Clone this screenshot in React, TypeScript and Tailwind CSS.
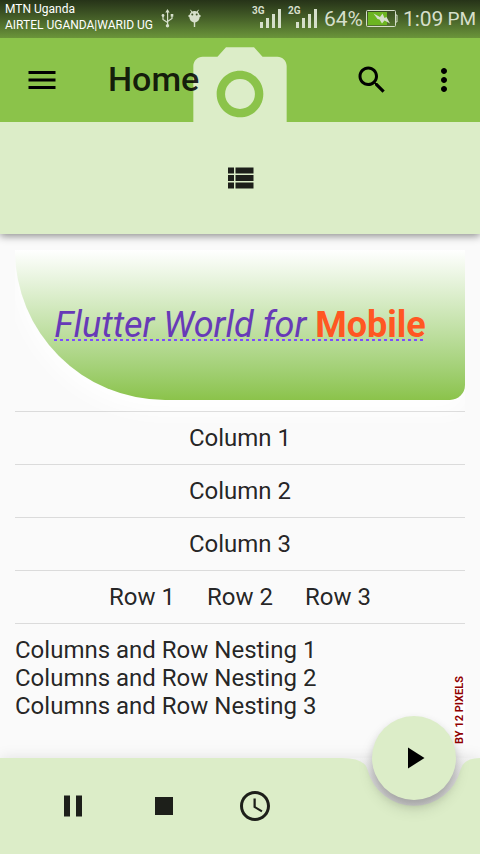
import type { ReactNode } from "react";

const COLUMNS = ["Column 1", "Column 2", "Column 3"];
const ROWS = ["Row 1", "Row 2", "Row 3"];
const NESTED = [
  "Columns and Row Nesting 1",
  "Columns and Row Nesting 2",
  "Columns and Row Nesting 3",
];

function Icon({ path }: { path: string }) {
  return (
    <svg viewBox="0 0 24 24" className="size-9" fill="currentColor" aria-hidden="true">
      <path d={path} />
    </svg>
  );
}

function IconButton({ label, children }: { label: string; children: ReactNode }) {
  return (
    <button
      type="button"
      aria-label={label}
      className="flex size-[72px] shrink-0 items-center justify-center"
    >
      {children}
    </button>
  );
}

function Signal({ network }: { network: string }) {
  return (
    <div className="relative h-5 w-[29px] pl-2">
      <span className="absolute -top-1 left-0 text-[10px] leading-3 font-bold">{network}</span>
      <svg viewBox="0 0 21 20" className="h-5 w-[21px]" fill="currentColor" aria-hidden="true">
        <path d="M0 13h3v6H0zM6 9h3v10H6zM12 5h3v14h-3zM18 0h3v19h-3z" />
      </svg>
    </div>
  );
}

function StatusBar() {
  return (
    <div className="flex h-[38px] items-start bg-linear-to-b from-[#263318] to-[#6b953a] text-[#d6dfcb]">
      <div className="pl-[5px] pt-px text-[12px] leading-4 whitespace-nowrap text-white">
        <p>MTN Uganda</p>
        <p>AIRTEL UGANDA|WARID UG</p>
      </div>
      <div className="flex gap-[13px] pt-[9px] pl-2">
        <svg viewBox="0 0 14 19" className="h-[19px] w-[14px]" fill="currentColor" aria-hidden="true">
          <path d="M6.500 0l2.200 3.500H4.300zM6 3h1.200v13H6z" />
          <circle cx="6.500" cy="16.800" r="1.700" />
          <path d="M2 7v3.500L6.500 13.500M11 6.500v3L6.500 12.500" fill="none" stroke="currentColor" strokeWidth="1.200" />
          <circle cx="2" cy="6.500" r="1.400" />
          <path d="M9.700 5h2.600v2.600H9.700z" />
        </svg>
        <svg viewBox="0 0 14 19" className="h-[19px] w-[14px]" fill="currentColor" aria-hidden="true">
          <path d="M2.500 .8L4 3.500M10.500 .8L9 3.500" stroke="currentColor" strokeWidth="1" />
          <path d="M1.500 6C2 3.200 4 2 6.500 2s4.500 1.200 5 4h1v2h-.8c-.2 3-2 5-4.500 5.400V18H5.800v-4.600C3.300 13 1.500 11 1.300 8H.5V6z" />
          <circle cx="4.300" cy="5.500" r="1" fill="#3f5527" />
          <circle cx="8.700" cy="5.500" r="1" fill="#3f5527" />
        </svg>
      </div>
      <div className="ml-auto flex gap-[7px] pt-[9px] pr-1">
        <Signal network="3G" />
        <Signal network="2G" />
        <div className="flex h-5 items-center text-[21px] leading-[22px] whitespace-nowrap">
          <span>64%</span>
          <svg viewBox="0 0 32 18" className="mr-[5px] ml-[3px] h-[18px] w-8" aria-hidden="true">
            <rect x="0.500" y="0.500" width="29" height="16" rx="1" fill="none" stroke="currentColor" />
            <path d="M2 2h19v13H2z" fill="#6cb521" />
            <path d="M30 5h1v7h-1" fill="none" stroke="currentColor" />
            <path d="M7.500 3.500L14 7 16.500 3.500 18.500 8 20.500 7 24 13.500 18.500 10.500 16 13.500 13.500 9.500 11.500 9z" fill="currentColor" />
          </svg>
          <span>1:09</span>
          <span className="ml-1 text-[19px]">PM</span>
        </div>
      </div>
    </div>
  );
}

function AppBar() {
  return (
    <header className="relative bg-[#8bc34a] shadow-[0_2px_8px_rgba(0,0,0,0.45)]">
      <StatusBar />
      <div className="relative flex h-[84px] items-center overflow-hidden text-black">
        {/* Camera artwork sits behind the toolbar and is cut off by the tab area */}
        <svg
          viewBox="0 0 24 24"
          className="absolute top-0 left-1/2 size-28 -translate-x-1/2"
          fill="#dcedc8"
          aria-hidden="true"
        >
          <circle cx="12" cy="12" r="3.200" />
          <path d="M9 2L7.170 4H4c-1.100 0-2 .9-2 2v12c0 1.100.9 2 2 2h16c1.100 0 2-.9 2-2V6c0-1.100-.9-2-2-2h-3.170L15 2H9zm3 15c-2.760 0-5-2.240-5-5s2.240-5 5-5 5 2.240 5 5-2.240 5-5 5z" />
        </svg>
        <div className="relative flex flex-1 items-center">
          <div className="flex w-[84px] justify-center">
            <IconButton label="Menu">
              <Icon path="M3 18h18v-2H3v2zm0-5h18v-2H3v2zm0-7v2h18V6H3z" />
            </IconButton>
          </div>
          <h1 className="flex-1 pb-0.5 pl-6 text-[34px] leading-10 font-medium text-black/87">Home</h1>
          <IconButton label="Search">
            <Icon path="M15.500 14h-.79l-.28-.27C15.410 12.590 16 11.110 16 9.500 16 5.910 13.090 3 9.500 3S3 5.910 3 9.500 5.910 16 9.500 16c1.610 0 3.090-.59 4.230-1.570l.27.28v.79l5 4.990L20.490 19l-4.990-5zm-6 0C7.010 14 5 11.990 5 9.500S7.010 5 9.500 5 14 7.010 14 9.500 11.990 14 9.500 14z" />
          </IconButton>
          <IconButton label="More options">
            <Icon path="M12 8c1.100 0 2-.9 2-2s-.9-2-2-2-2 .9-2 2 .9 2 2 2zm0 2c-1.100 0-2 .9-2 2s.9 2 2 2 2-.9 2-2-.9-2-2-2zm0 6c-1.100 0-2 .9-2 2s.9 2 2 2 2-.9 2-2-.9-2-2-2z" />
          </IconButton>
        </div>
      </div>
      <div className="flex h-28 items-center justify-center bg-[#dcedc8] text-black/87">
        <IconButton label="List view">
          <Icon path="M4 14h4v-4H4v4zm0 5h4v-4H4v4zM4 9h4V5H4v4zm5 5h12v-4H9v4zm0 5h12v-4H9v4zM9 5v4h12V5H9z" />
        </IconButton>
      </div>
    </header>
  );
}

function Footer() {
  return (
    <footer className="relative flex h-24 items-center gap-[19px] bg-[#dcedc8] pl-[37px] text-black/87 shadow-[0_0_14px_rgba(0,0,0,0.1)]">
      <IconButton label="Pause">
        <Icon path="M6 19h4V5H6v14zm8-14v14h4V5h-4z" />
      </IconButton>
      <IconButton label="Stop">
        <Icon path="M6 6h12v12H6z" />
      </IconButton>
      <IconButton label="Recent">
        <Icon path="M11.990 2C6.470 2 2 6.480 2 12s4.470 10 9.990 10C17.520 22 22 17.520 22 12S17.520 2 11.990 2zM12 20c-4.420 0-8-3.580-8-8s3.580-8 8-8 8 3.580 8 8-3.580 8-8 8zm.5-13H11v6l5.250 3.150.75-1.230-4.500-2.670z" />
      </IconButton>
      {/* Notch cut into the bar around the floating button */}
      <svg viewBox="0 0 138 60" className="absolute top-0 right-0 h-[60px] w-[138px]" aria-hidden="true">
        <defs>
          <linearGradient id="notch" x1="0" y1="0" x2="0" y2="1">
            <stop offset="0" stopColor="#f1f1f1" />
            <stop offset="0.4" stopColor="#dedede" />
            <stop offset="1" stopColor="#d6d6d6" />
          </linearGradient>
        </defs>
        <path
          d="M0 0Q22.500 0 25.500 11.700A48 48 0 0 0 118.500 11.700Q121.500 0 138 0z"
          fill="url(#notch)"
        />
      </svg>
      <button
        type="button"
        aria-label="Play"
        className="absolute -top-[42px] right-6 flex size-[84px] items-center justify-center rounded-full bg-[#dcedc8] text-black shadow-[0_5px_8px_rgba(0,0,0,0.15),0_9px_15px_rgba(0,0,0,0.12)]"
      >
        <Icon path="M8 5v14l11-7z" />
      </button>
    </footer>
  );
}

export default function App() {
  return (
    <div className="flex min-h-screen flex-col bg-[#fafafa] font-[Roboto,sans-serif] text-[24px] leading-7 text-black/87">
      <AppBar />
      <main className="flex-1 px-[15px]">
        <div className="overflow-x-clip pt-4">
          <div className="flex h-[150px] items-center justify-center rounded-br-[15px] rounded-bl-[150px] bg-linear-to-b from-white to-[#8bc34a] shadow-[0_12px_24px_#fff]">
            <p className="text-[36px] leading-[42px] text-[#673ab7]">
              {/* Dashed underline shared by both text styles */}
              <span className="bg-[image:repeating-linear-gradient(90deg,#7c4dff_0_3px,transparent_3px_6px)] bg-[length:100%_2px] bg-[position:0_35px] bg-no-repeat">
                <em>Flutter World for </em>
                <strong className="font-bold text-[#ff5722]">Mobile</strong>
              </span>
            </p>
          </div>
          <div className="relative mt-[11px]">
            {COLUMNS.map((name) => (
              <p key={name} className="border-t border-black/12 py-3 text-center">
                {name}
              </p>
            ))}
            <div className="flex justify-center gap-8 border-y border-black/12 py-3">
              {ROWS.map((name) => (
                <span key={name}>{name}</span>
              ))}
            </div>
          </div>
          <div className="relative h-[120px] pt-3">
            {NESTED.map((name) => (
              <p key={name}>{name}</p>
            ))}
            {/* Layout overflow warning, running up the right edge */}
            <span className="absolute right-0 bottom-0 rotate-180 bg-white text-[11px] leading-[10px] font-bold whitespace-nowrap text-[#900000] [writing-mode:vertical-rl]">
              BY 12 PIXELS
            </span>
          </div>
        </div>
      </main>
      <Footer />
    </div>
  );
}
